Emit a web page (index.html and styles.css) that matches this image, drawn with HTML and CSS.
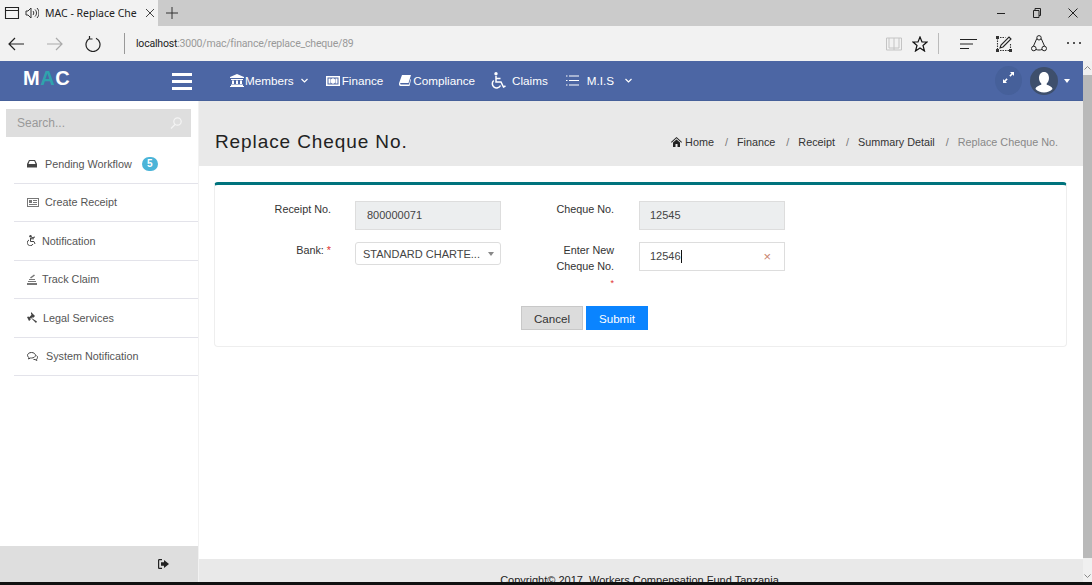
FILE: index.html

```html
<!DOCTYPE html>
<html lang="en">
<head>
  <meta charset="UTF-8" />
  <title>MAC - Replace Cheque No.</title>
  <meta name="viewport" content="width=device-width, initial-scale=1.0" />
  <link rel="stylesheet" href="styles.css">
</head>
<body>
  <div class="tabstrip">
    <div class="tab">
      <svg class="ico tab-page" width="16" height="14" viewBox="0 0 16 14"><path d="M1.5 1.5h13v11h-13zM1.5 4.5h13" fill="none" stroke="#222" stroke-width="1.1"/></svg>
      <svg class="ico tab-sound" width="14" height="14" viewBox="0 0 14 14"><path d="M1 5h2l3-3v10L3 9H1zM8 5c1 1 1 3 0 4M10 3.500c2 2 2 5 0 7M12 2c2.600 2.800 2.600 7.200 0 10" fill="none" stroke="#333" stroke-width="1"/></svg>
      <span class="tab-title">MAC - Replace Che</span>
      <svg class="ico tab-close" width="10" height="10" viewBox="0 0 10 10"><path d="M1 1l8 8M9 1l-8 8" stroke="#444" stroke-width="1"/></svg>
    </div>
    <svg class="ico new-tab" width="12" height="12" viewBox="0 0 12 12"><path d="M6 0v12M0 6h12" stroke="#333" stroke-width="1"/></svg>
    <div class="win-btns">
      <svg class="ico" width="10" height="10" viewBox="0 0 10 10"><path d="M1 5.500h8" stroke="#222" stroke-width="1"/></svg>
      <svg class="ico" width="10" height="10" viewBox="0 0 10 10"><path d="M1.500 2.500h5.500v7h-5.500zM3 2.500v-2h5.500v7h-1.500" fill="none" stroke="#222" stroke-width="1"/></svg>
      <svg class="ico" width="10" height="10" viewBox="0 0 10 10"><path d="M.5.500l9 9M9.500.500l-9 9" stroke="#222" stroke-width="1"/></svg>
    </div>
  </div>

  <div class="addressbar">
    <svg class="ico btn-back" width="16" height="14" viewBox="0 0 16 14"><path d="M16 7H1M7 1L1 7l6 6" fill="none" stroke="#222" stroke-width="1.200"/></svg>
    <svg class="ico btn-forward" width="16" height="14" viewBox="0 0 16 14"><path d="M0 7h15M9 1l6 6-6 6" fill="none" stroke="#aaa" stroke-width="1.200"/></svg>
    <svg class="ico btn-reload" width="16" height="16" viewBox="0 0 16 16"><path d="M5 2.200A7 7 0 1 0 11 2.200M4.500 0v3h3" fill="none" stroke="#222" stroke-width="1.200"/></svg>
    <span class="bar-sep"></span>
    <span class="url">localhost<span class="url-rest">:3000/mac/finance/replace_cheque/89</span></span>
    <div class="bar-tools">
      <svg class="ico tool-book" width="16" height="14" viewBox="0 0 16 14"><path d="M.5 1h15v12H.5zM8 1v12M3 1v10h5M13 1v10H8" fill="none" stroke="#c4c4c4" stroke-width="1"/></svg>
      <svg class="ico tool-star" width="16" height="16" viewBox="0 0 16 16"><path d="M8 1l2 5h5l-4 3.500 1.500 5.500L8 12l-4.500 3L5 9.500 1 6h5z" fill="none" stroke="#111" stroke-width="1.200"/></svg>
      <span class="bar-sep tool-sep"></span>
      <svg class="ico tool-hub" width="17" height="12" viewBox="0 0 17 12"><path d="M0 1.500h17M0 6h13M0 10.500h9" stroke="#222" stroke-width="1.200"/></svg>
      <svg class="ico tool-note" width="16" height="16" viewBox="0 0 16 16"><path d="M1.500 2v12.500H14" fill="none" stroke="#333" stroke-width="1.100" stroke-dasharray="1.500 1"/><path d="M1.500 1.500h8M14.500 8v6" fill="none" stroke="#333" stroke-width="1.100" stroke-dasharray="1.500 1"/><path d="M0 0h3v3H0zM13 13h3v3h-3zM0 13h3v3H0z" fill="#333"/><path d="M4 12l1-3 8-8 2 2-8 8z" fill="none" stroke="#222" stroke-width="1.100"/></svg>
      <svg class="ico tool-share" width="16" height="17" viewBox="0 0 16 17"><path d="M5.800 3.500L2.500 11M10.200 3.500l3.300 7.500M5 14.500c2 .7 4 .7 6 0" fill="none" stroke="#222" stroke-width="1"/><circle cx="8" cy="2.800" r="2.200" fill="none" stroke="#222"/><circle cx="2.800" cy="13.500" r="2.300" fill="none" stroke="#222"/><circle cx="13.200" cy="13.500" r="2.300" fill="none" stroke="#222"/></svg>
      <svg class="ico tool-more" width="14" height="3" viewBox="0 0 14 3"><path d="M0 1h2M6 1h2M12 1h2" stroke="#222" stroke-width="1.500"/></svg>
    </div>
  </div>

  <div class="viewport">
    <div class="page">
      <header class="topnav">
        <div class="logo">M<span class="logo-a">A</span>C</div>
        <div class="burger"><span></span><span></span><span></span></div>
        <nav class="menu">
          <a class="menu-item m-members">
            <svg class="ico" width="14" height="13" viewBox="0 0 14 13"><path d="M7 0l7 3v1H0V3zM1 5h12v1H1zM2 6.500h2V10H2zM6 6.500h2V10H6zM10 6.500h2V10h-2zM1 10.500h12V12H1zM0 12h14v1H0z" fill="#fff"/></svg>
            <span>Members</span>
            <svg class="ico chev" width="7" height="5" viewBox="0 0 7 5"><path d="M.5 1l3 3 3-3" fill="none" stroke="#fff" stroke-width="1.200"/></svg>
          </a>
          <a class="menu-item m-finance">
            <svg class="ico" width="14" height="10" viewBox="0 0 14 10"><path fill-rule="evenodd" d="M0 0h14v10H0zM1.500 1.500v7h11v-7zM7 2.200a2.300 2.800 0 1 1 0 5.600 2.300 2.800 0 0 1 0-5.600z" fill="#fff"/><path d="M2.500 2.500h2v5h-2zM9.500 2.500h2v5h-2z" fill="#fff"/></svg>
            <span>Finance</span>
          </a>
          <a class="menu-item m-compliance">
            <svg class="ico" width="12" height="11" viewBox="0 0 12 11"><path d="M3 0h9l-2.500 8H1.500C1 8 1 9.500 1.800 9.500H10L11.500 4l.5.500L10.500 11H1.500C0 11-.3 9 .3 7.500z" fill="#fff"/></svg>
            <span>Compliance</span>
          </a>
          <a class="menu-item m-claims">
            <svg class="ico" width="16" height="18" viewBox="0 0 16 18"><circle cx="6" cy="1.700" r="1.700" fill="#fff"/><path d="M6 4v6h5l2.500 5 2-1M6 6.500h4.500M3.700 8.500a4.300 4.300 0 1 0 6.800 5" fill="none" stroke="#fff" stroke-width="1.500"/></svg>
            <span>Claims</span>
          </a>
          <a class="menu-item m-mis">
            <svg class="ico" width="13" height="11" viewBox="0 0 13 11"><path d="M3 1h10M3 5.500h10M3 10h10M0 1h1.500M0 5.500h1.500M0 10h1.500" stroke="#fff" stroke-width="1.100"/></svg>
            <span>M.I.S</span>
            <svg class="ico chev" width="7" height="5" viewBox="0 0 7 5"><path d="M.5 1l3 3 3-3" fill="none" stroke="#fff" stroke-width="1.200"/></svg>
          </a>
        </nav>
        <div class="nav-right">
          <span class="fullscreen">
            <svg class="ico" width="11" height="11" viewBox="0 0 11 11"><path d="M7 0h4v4L9.600 2.600 7.500 4.700 6.300 3.500 8.400 1.400zM4 11H0V7l1.400 1.400 2.100-2.100 1.200 1.200-2.100 2.100z" fill="#fff"/></svg>
          </span>
          <span class="avatar">
            <svg class="ico" width="24" height="24" viewBox="0 0 24 24"><path d="M12 3c3.200 0 5 2.600 5 6 0 2.500-1 4.500-2.300 5.500v1.300c2 .8 5.300 1.500 5.800 4.200-2 2.300-5 3.500-8.500 3.500s-6.500-1.200-8.500-3.500c.5-2.700 3.800-3.400 5.800-4.200v-1.300C8 13.500 7 11.500 7 9c0-3.400 1.800-6 5-6z" fill="#fff"/></svg>
          </span>
          <span class="caret-down"></span>
        </div>
      </header>

      <div class="body-row">
        <aside class="sidebar">
          <div class="side-top">
            <div class="search">
              <span>Search...</span>
              <svg class="ico" width="12" height="12" viewBox="0 0 12 12"><circle cx="7.500" cy="4.500" r="3.700" fill="none" stroke="#f4f4f4" stroke-width="1.200"/><path d="M5 7.500L1 11.500" stroke="#f4f4f4" stroke-width="1.200"/></svg>
            </div>
            <ul class="side-list">
              <li>
                <svg class="ico" width="10" height="8" viewBox="0 0 10 8"><path fill-rule="evenodd" d="M2 0h6l2 4v3.500H0V4zM2.700 1L1.500 4h7L7.300 1z" fill="#444"/></svg>
                <span class="lbl l-pending">Pending Workflow</span>
                <span class="badge">5</span>
              </li>
              <li>
                <svg class="ico" width="12" height="9" viewBox="0 0 12 9"><path fill-rule="evenodd" d="M0 0h12v9H0zM1 1v7h10V1zM2 2h3v3H2zM6 2h4v1H6zM6 4h4v1H6zM2 6h8v1H2z" fill="#777"/></svg>
                <span class="lbl l-receipt">Create Receipt</span>
              </li>
              <li>
                <svg class="ico" width="9" height="11" viewBox="0 0 9 11"><circle cx="3.500" cy="1.300" r="1.200" fill="#444"/><path d="M3.500 3v3.500H7L8 9M3.500 3.800h3.500M2 5a3 3 0 1 0 4 4M4 3l4-1" fill="none" stroke="#444" stroke-width="1"/></svg>
                <span class="lbl l-note">Notification</span>
              </li>
              <li>
                <svg class="ico" width="10" height="11" viewBox="0 0 10 11"><path d="M0 9h10v2H0zM1 7h8v1H1zM2 5h6v1H2zM3 3.500l4-3 1 1-4 3z" fill="#777"/></svg>
                <span class="lbl">Track Claim</span>
              </li>
              <li>
                <svg class="ico" width="11" height="11" viewBox="0 0 11 11"><path d="M4 0l4 4-2 2-.7-.7-.8.800 5.500 3.500-1 1.400L4 6l-.8.800L3.800 7.500 2 9 0 5l1.500-.5.700.700 2.400-2.400L4 2z" fill="#444"/></svg>
                <span class="lbl">Legal Services</span>
              </li>
              <li>
                <svg class="ico" width="11" height="9" viewBox="0 0 11 9"><path d="M4.500.500C2.300.500.500 1.700.500 3.300c0 1 .7 1.800 1.500 2.300L1.500 7l2-1h1c2.200 0 4-1.200 4-2.700S6.700.500 4.500.500z" fill="none" stroke="#444"/><path d="M9.500 3.500c.8.500 1 1.200 1 1.800 0 .9-.5 1.500-1 1.900l.4 1.300-1.900-1H6.500" fill="none" stroke="#444"/></svg>
                <span class="lbl l-sys">System Notification</span>
              </li>
            </ul>
          </div>
          <div class="side-bottom">
            <svg class="ico" width="11" height="10" viewBox="0 0 11 10"><path d="M4 0H1.500C.5 0 0 .5 0 1.500v7C0 9.500.5 10 1.500 10H4V8.800H1.500c-.2 0-.3-.1-.3-.3v-7c0-.2.1-.3.3-.3H4zM6 1l5 4-5 4V6.700H3V3.300h3z" fill="#222"/></svg>
          </div>
        </aside>

        <main class="content">
          <div class="page-head">
            <h1>Replace Cheque No.</h1>
            <ol class="crumbs">
              <li>
                <svg class="ico" width="11" height="10" viewBox="0 0 11 10"><path d="M5.500 0L11 5l-.6.700L5.500 1.300.6 5.700 0 5zM2 5.500l3.500-3 3.500 3V10H6.500V7h-2v3H2z" fill="#222"/></svg>
                Home
              </li>
              <li class="sep">/</li><li>Finance</li>
              <li class="sep">/</li><li>Receipt</li>
              <li class="sep">/</li><li>Summary Detail</li>
              <li class="sep">/</li><li class="current">Replace Cheque No.</li>
            </ol>
          </div>

          <div class="card-wrap">
            <section class="card">
              <div class="form-grid">
                <label class="f-label">Receipt No.</label>
                <div class="field readonly">800000071</div>
                <label class="f-label f-label-r">Cheque No.</label>
                <div class="field readonly field-r">12545</div>

                <label class="f-label">Bank: <span class="req">*</span></label>
                <div class="field select"><span class="select-text">STANDARD CHARTE...</span><span class="select-arrow"></span></div>
                <label class="f-label f-label-r f-tall">Enter New<br>Cheque No.<br><span class="req req-low">*</span></label>
                <div class="field field-r focused"><span>12546</span><span class="text-caret"></span><span class="clear">×</span></div>
              </div>
              <div class="form-actions">
                <button class="btn btn-cancel" type="button">Cancel</button>
                <button class="btn btn-submit" type="button">Submit</button>
              </div>
            </section>
          </div>

          <footer class="foot"><span>Copyright© 2017, Workers Compensation Fund Tanzania.</span></footer>
        </main>
      </div>
    </div>

    <div class="scrollbar">
      <span class="sb-arrow">
        <svg class="ico" width="7" height="4" viewBox="0 0 7 4"><path d="M.5 3.500l3-3 3 3" fill="none" stroke="#888"/></svg>
      </span>
      <span class="sb-thumb"></span>
      <span class="sb-rest">
        <svg class="ico" width="7" height="4" viewBox="0 0 7 4"><path d="M.5.500l3 3 3-3" fill="none" stroke="#888"/></svg>
      </span>
    </div>
  </div>
  <div class="taskbar-edge"></div>
</body>
</html>
```

FILE: styles.css

```css
html, body {
  margin: 0;
  height: 100%;
  overflow: hidden;
}
body {
  font-family: 'Liberation Sans', Arial, sans-serif;
  font-size: 12px;
  color: #333;
  background: #fff;
  display: flex;
  flex-direction: column;
  height: 585px;
}
.ico {
  display: block;
  flex: none;
}

/* browser chrome */
.tabstrip {
  height: 26px;
  background: #cbcbcb;
  display: flex;
  align-items: center;
  flex: none;
}
.tab {
  width: 158px;
  height: 26px;
  background: #f2f2f2;
  display: flex;
  align-items: center;
  font-family: 'Noto Sans', sans-serif;
  font-size: 10.5px;
  color: #222;
}
.tab-page {
  margin-left: 4px;
}
.tab-sound {
  margin-left: 5px;
}
.tab-title {
  margin-left: 6px;
  width: 92px;
  white-space: nowrap;
}
.tab-close {
  margin-left: 8px;
}
.new-tab {
  margin-left: 8px;
}
.win-btns {
  margin-left: auto;
  margin-right: 14px;
  display: flex;
  gap: 26px;
}
.addressbar {
  height: 35px;
  background: #f2f2f2;
  display: flex;
  align-items: center;
  flex: none;
}
.btn-back {
  margin-left: 8px;
}
.btn-forward {
  margin-left: 23px;
}
.btn-reload {
  margin-left: 22px;
}
.bar-sep {
  width: 1px;
  height: 21px;
  background: #999;
  margin-left: 23px;
}
.url {
  margin-left: 11px;
  font-family: Roboto, sans-serif;
  font-size: 10.5px;
  letter-spacing: -.2px;
  color: #222;
}
.url-rest {
  color: #999;
}
.bar-tools {
  margin-left: auto;
  display: flex;
  align-items: center;
}
.tool-book {
  margin-right: 10px;
}
.tool-sep {
  margin-left: 10px;
  background: #bbb;
}
.tool-hub {
  margin-left: 21px;
}
.tool-note {
  margin-left: 19px;
}
.tool-share {
  margin-left: 19px;
}
.tool-more {
  margin-left: 20px;
  margin-right: 11px;
}

/* page inside the browser */
.viewport {
  flex: 1;
  min-height: 0;
  display: flex;
}
.page {
  flex: 1;
  min-width: 0;
  display: flex;
  flex-direction: column;
}
.scrollbar {
  width: 9px;
  background: #f0f0f0;
  display: flex;
  flex-direction: column;
  align-items: center;
}
.sb-arrow {
  height: 14px;
  display: flex;
  align-items: center;
}
.sb-thumb {
  width: 100%;
  height: 483px;
  background: #b9b9b9;
}
.sb-rest {
  flex: 1;
  display: flex;
  align-items: flex-end;
  padding-bottom: 4px;
}
.taskbar-edge {
  height: 3px;
  background: #111;
  flex: none;
}

/* top nav */
.topnav {
  height: 40px;
  background: #4c66a4;
  color: #fff;
  display: flex;
  align-items: center;
  flex: none;
  border-bottom: 1px solid #46609a;
  box-sizing: border-box;
}
.logo {
  margin-left: 23px;
  width: 149px;
  font-size: 20px;
  font-weight: bold;
  letter-spacing: .5px;
  margin-top: -4px;
}
.logo-a {
  color: #2fa3ad;
}
.burger {
  width: 20px;
  display: flex;
  flex-direction: column;
  gap: 4px;
  margin-top: 2px;
}
.burger span {
  height: 3px;
  background: #fff;
}
.menu {
  display: flex;
  align-items: center;
  margin-left: 38px;
  font-size: 11.7px;
}
.menu-item {
  display: flex;
  align-items: center;
  gap: 2px;
  white-space: nowrap;
}
.m-members {
  gap: 1px;
}
.m-members .chev {
  margin-left: 6px;
}
.m-finance {
  margin-left: 18px;
}
.m-compliance {
  margin-left: 16px;
}
.m-claims {
  margin-left: 15px;
  gap: 6px;
}
.m-mis {
  margin-left: 18px;
  gap: 8px;
}
.m-mis .chev {
  margin-left: 3px;
}
.nav-right {
  margin-left: auto;
  display: flex;
  align-items: center;
  margin-right: 13px;
}
.fullscreen {
  width: 27px;
  height: 29px;
  border-radius: 50%;
  background: #46609a;
  display: flex;
  justify-content: center;
  padding-top: 6px;
  box-sizing: border-box;
}
.avatar {
  width: 28px;
  height: 28px;
  border-radius: 50%;
  background: #3e4f6c;
  margin-left: 8px;
  display: flex;
  align-items: center;
  justify-content: center;
  overflow: hidden;
}
.caret-down {
  margin-left: 6px;
  border-left: 3.5px solid transparent;
  border-right: 3.5px solid transparent;
  border-top: 4px solid #fff;
}

/* sidebar */
.body-row {
  flex: 1;
  min-height: 0;
  display: flex;
}
.sidebar {
  width: 199px;
  flex: none;
  display: flex;
  flex-direction: column;
  justify-content: space-between;
  background: #fff;
  border-right: 1px solid #f2f2f2;
  box-sizing: border-box;
}
.side-top {
  padding-top: 8px;
}
.search {
  margin-left: 6px;
  width: 185px;
  height: 28px;
  background: #dedede;
  display: flex;
  align-items: center;
  justify-content: space-between;
  padding: 0 9px 0 11px;
  box-sizing: border-box;
  color: #999;
}
.side-list {
  list-style: none;
  margin: 8px 0 0 14px;
  padding: 0;
  color: #555;
  font-size: 10.8px;
}
.side-list li {
  height: 38.5px;
  display: flex;
  align-items: center;
  padding-left: 13px;
  border-bottom: 1px solid #e3e3ea;
  box-sizing: border-box;
}
.lbl {
  margin-left: 5px;
}
.l-pending {
  margin-left: 8px;
}
.l-receipt {
  margin-left: 6px;
}
.l-note {
  margin-left: 6px;
}
.l-sys {
  margin-left: 8px;
}
.badge {
  margin-left: 10px;
  width: 16px;
  height: 14px;
  border-radius: 7px;
  background: #4bb4d8;
  color: #fff;
  font-size: 10px;
  font-weight: bold;
  text-align: center;
  line-height: 14px;
}
.side-bottom {
  height: 36px;
  background: #dedede;
  display: flex;
  align-items: center;
  padding-left: 158px;
}

/* main */
.content {
  flex: 1;
  min-width: 0;
  display: flex;
  flex-direction: column;
}
.page-head {
  height: 65px;
  background: #e9e9e9;
  display: flex;
  align-items: center;
  justify-content: space-between;
  padding: 16px 25px 0 16px;
  box-sizing: border-box;
  flex: none;
}
.page-head h1 {
  margin: 0;
  font-size: 19px;
  font-weight: normal;
  letter-spacing: .9px;
  color: #222;
}
.crumbs {
  list-style: none;
  margin: 0;
  padding: 0;
  display: flex;
  align-items: center;
  gap: 10px;
  font-size: 10.8px;
  color: #333;
}
.crumbs li {
  display: flex;
  align-items: center;
  gap: 3px;
}
.crumbs .sep {
  color: #777;
  margin-left: 1px;
  margin-right: -1px;
}
.crumbs .current {
  color: #888;
}
.card-wrap {
  flex: 1;
  padding: 16px 16px 0 15px;
}
.card {
  height: 165px;
  box-sizing: border-box;
  border: 1px solid #eeeeee;
  border-top: 3px solid #00737d;
  border-radius: 4px;
  background: #fff;
}
.form-grid {
  display: grid;
  grid-template-columns: 116px 146px 90px 146px;
  column-gap: 24px;
  row-gap: 12px;
  padding-top: 16px;
  font-size: 11px;
}
.f-label {
  text-align: right;
  line-height: 16px;
  font-size: 10.8px;
  color: #333;
}
.f-label-r {
  padding-right: 1px;
}
.f-tall {
  height: 46px;
}
.req {
  color: #e03030;
}
.req-low {
  font-size: 9px;
}
.field {
  height: 29px;
  box-sizing: border-box;
  border: 1px solid #ddd;
  display: flex;
  align-items: center;
  padding-left: 11px;
  padding-bottom: 1px;
  color: #444;
}
.field-r {
  padding-left: 10px;
}
.readonly {
  background: #eceeef;
}
.select {
  height: 23px;
  border-radius: 3px;
  padding-left: 7px;
  padding-right: 6px;
  padding-bottom: 0;
  justify-content: space-between;
}
.select-arrow {
  border-left: 3.5px solid transparent;
  border-right: 3.5px solid transparent;
  border-top: 4px solid #888;
}
.focused {
  background: #fff;
}
.text-caret {
  width: 1px;
  height: 13px;
  background: #111;
}
.clear {
  margin-left: auto;
  margin-right: 13px;
  color: #c8836e;
  font-size: 13px;
}
.form-actions {
  display: flex;
  gap: 3px;
  margin-top: 18px;
  padding-left: 306px;
}
.btn {
  width: 62px;
  height: 24px;
  font-family: inherit;
  font-size: 11.6px;
  padding: 0;
  border-radius: 0;
  cursor: pointer;
}
.btn-cancel {
  background: #dcdcdc;
  border: 1px solid #c8c8c8;
  color: #333;
}
.btn-submit {
  background: #0a84ff;
  border: 1px solid #0a84ff;
  color: #fff;
}
.foot {
  height: 23px;
  background: #e9e9e9;
  flex: none;
  text-align: center;
  overflow: hidden;
  font-size: 11px;
  padding-top: 15px;
  box-sizing: border-box;
  color: #222;
}
```
